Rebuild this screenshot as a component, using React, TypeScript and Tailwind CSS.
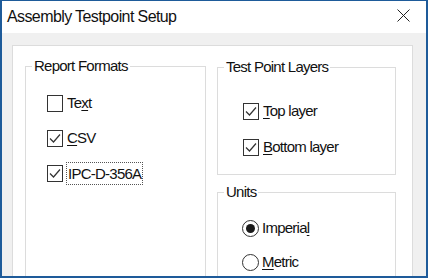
function Check({ checked }: { checked: boolean }) {
    return (
        <span className="flex h-[17px] w-4 shrink-0 items-center justify-center border border-[#333333] bg-white">
            {checked && (
                <svg width="14" height="15" viewBox="0 0 14 15">
                    <polyline points="2,7.5 5.5,11 12,3.5" fill="none" stroke="#333333" strokeWidth="1.2" />
                </svg>
            )}
        </span>
    );
}

function Radio({ checked }: { checked: boolean }) {
    return (
        <svg width="17" height="17" viewBox="0 0 17 17" className="shrink-0">
            <circle cx="8.5" cy="8.5" r="8" fill="white" stroke="#333333" strokeWidth="1" />
            {checked && <circle cx="8.5" cy="8.5" r="4.5" fill="#1a1a1a" />}
        </svg>
    );
}

function Group({ title, className, children }: { title: string; className: string; children: React.ReactNode }) {
    return (
        <div className={"relative border border-[#dcdcdc] " + className}>
            <span className="absolute -top-[10px] left-[6px] bg-white px-[2px] leading-[18px]">{title}</span>
            {children}
        </div>
    );
}

export default function App() {
    return (
        <div className="flex h-[278px] w-[428px] flex-col overflow-hidden border-x-2 border-t border-b-2 border-[#1e5b9a] bg-[#f0f0f0] font-['Liberation_Sans',Arial,sans-serif] text-[15px] tracking-[-0.75px] text-[#111111]">
            <div className="flex h-[32px] shrink-0 items-center justify-between bg-white pl-[5px] pr-[16px]">
                <span className="text-[16px] tracking-[-0.6px]">Assembly Testpoint Setup</span>
                <svg width="13" height="13" viewBox="0 0 13 13" className="mb-[3px]">
                    <path d="M0.5 0.5 L12.5 12.5 M12.5 0.5 L0.5 12.5" stroke="#222222" strokeWidth="1" />
                </svg>
            </div>

            <div className="min-h-0 flex-1 pl-[10px] pr-[13px] pt-[12px]">
                <div className="flex h-[300px] gap-[11px] border border-[#dcdcdc] bg-white pl-[12px] pr-[16px] pt-[20px]">
                    <Group title="Report Formats" className="h-[240px] w-[181px] pl-[21px] pt-[28px]">
                        <div className="flex flex-col gap-[18px]">
                            <label className="flex h-[17px] items-center gap-[4px]">
                                <Check checked={false} />
                                <span>
                                    Te<u className="underline-offset-[2px]">x</u>t
                                </span>
                            </label>
                            <label className="flex h-[17px] items-center gap-[4px]">
                                <Check checked />
                                <span>
                                    <u className="underline-offset-[2px]">C</u>SV
                                </span>
                            </label>
                            <label className="flex h-[17px] items-center gap-[3px]">
                                <Check checked />
                                <span className="border border-dotted border-[#555555] px-[1px] py-[2px] leading-[17px]">IPC-D-356A</span>
                            </label>
                        </div>
                    </Group>

                    <div className="mt-[1px] flex w-[179px] flex-col gap-[17px]">
                        <Group title="Test Point Layers" className="h-[108px] pl-[25px] pt-[35px]">
                            <div className="flex flex-col gap-[19px]">
                                <label className="flex h-[17px] items-center gap-[4px]">
                                    <Check checked />
                                    <span>
                                        <u className="underline-offset-[2px]">T</u>op layer
                                    </span>
                                </label>
                                <label className="flex h-[17px] items-center gap-[4px]">
                                    <Check checked />
                                    <span>
                                        <u className="underline-offset-[2px]">B</u>ottom layer
                                    </span>
                                </label>
                            </div>
                        </Group>

                        <Group title="Units" className="h-[120px] pl-[24px] pt-[27px]">
                            <div className="flex flex-col gap-[17px]">
                                <label className="flex h-[17px] items-center gap-[3px]">
                                    <Radio checked />
                                    <span>
                                        Imperia<u className="underline-offset-[2px]">l</u>
                                    </span>
                                </label>
                                <label className="flex h-[17px] items-center gap-[3px]">
                                    <Radio checked={false} />
                                    <span>
                                        <u className="underline-offset-[2px]">M</u>etric
                                    </span>
                                </label>
                            </div>
                        </Group>
                    </div>
                </div>
            </div>
        </div>
    );
}
